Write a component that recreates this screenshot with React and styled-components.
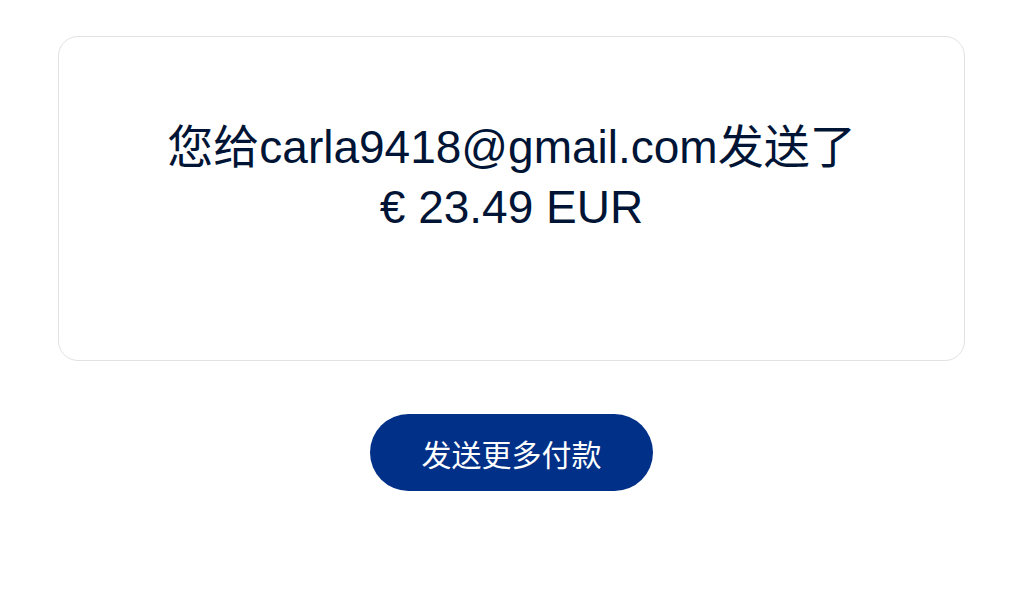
import React from "react";
import styled, { createGlobalStyle } from "styled-components";

const GlobalStyle = createGlobalStyle`
  html, body {
    margin: 0;
    padding: 0;
    background: #ffffff;
  }
  body {
    font-family: "Liberation Sans", Arial, "Noto Sans CJK SC", sans-serif;
  }
`;

const Page = styled.main`
  display: flex;
  flex-direction: column;
  align-items: center;
  gap: 53px;
  padding: 36px 60px 0 58px;
`;

const Card = styled.section`
  box-sizing: border-box;
  align-self: stretch;
  height: 325px;
  border: 1px solid #e2e2e2;
  border-radius: 20px;
  padding: 80px 40px 0;
  display: flex;
  flex-direction: column;
  align-items: center;
`;

const Message = styled.h1`
  margin: 0;
  font-family: "Liberation Sans", Arial, "Noto Sans CJK SC", sans-serif;
  font-weight: 400;
  font-size: 46px;
  line-height: 60px;
  color: #001435;
  text-align: center;
`;

const Line = styled.span`
  display: block;
`;

const PrimaryButton = styled.button`
  box-sizing: border-box;
  width: 283px;
  height: 77px;
  border: none;
  border-radius: 39px;
  background: #003087;
  color: #ffffff;
  font-family: "Noto Sans CJK SC", "Liberation Sans", sans-serif;
  font-size: 30px;
  cursor: pointer;
  display: flex;
  align-items: center;
  justify-content: center;
  padding: 0;
`;

export default function App() {
  return (
    <>
      <GlobalStyle />
      <Page>
        <Card>
          <Message>
            <Line>您给carla9418@gmail.com发送了</Line>
            <Line>€ 23.49 EUR</Line>
          </Message>
        </Card>
        <PrimaryButton>发送更多付款</PrimaryButton>
      </Page>
    </>
  );
}
